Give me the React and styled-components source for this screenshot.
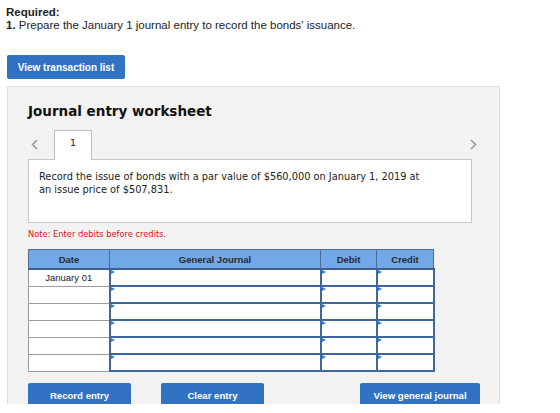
import React from 'react';
import styled, { createGlobalStyle } from 'styled-components';

const GlobalStyle = createGlobalStyle`
  html, body {
    margin: 0;
    padding: 0;
    background: #ffffff;
  }
`;

const Page = styled.div`
  height: 404px;
  overflow: hidden;
  padding: 6px 0 0 7px;
  box-sizing: border-box;
  font-family: "Liberation Sans", Arial, sans-serif;
  color: #222;
`;

const Required = styled.div`
  font-size: 11.5px;
  line-height: 13px;
  margin-left: -1px;
  b {
    font-weight: bold;
  }
`;

const BlueButton = styled.button`
  display: flex;
  align-items: center;
  justify-content: center;
  width: ${p => p.$w}px;
  height: 24px;
  border: none;
  border-radius: 2px;
  background: #3272c2;
  color: #ffffff;
  font-family: "Liberation Sans", Arial, sans-serif;
  font-weight: bold;
  font-size: ${p => p.$fs || 9.6}px;
  padding: 0;
  flex: none;
`;

const TopButtonRow = styled.div`
  margin-top: 23px;
`;

const Panel = styled.div`
  margin-top: 7px;
  width: 493px;
  box-sizing: border-box;
  background: #f2f2f2;
  border: 1px solid #dedede;
  padding: 15px 0 0 20px;
  min-height: 330px;
`;

const Title = styled.h2`
  margin: 0;
  font-family: "DejaVu Sans", Verdana, sans-serif;
  font-weight: bold;
  font-size: 13.5px;
  line-height: 18px;
  color: #111;
`;

const TabRow = styled.div`
  display: flex;
  align-items: flex-end;
  width: 444px;
  margin-top: 9px;
  height: 30px;
`;

const Chevron = styled.div`
  width: 26px;
  align-self: center;
  display: flex;
  justify-content: ${p => (p.$right ? 'flex-end' : 'flex-start')};
  padding-left: ${p => (p.$right ? 0 : 3)}px;
  margin-left: ${p => (p.$right ? 'auto' : 0)};
  margin-right: ${p => (p.$right ? -5 : 0)}px;
  box-sizing: border-box;
`;

const Tab = styled.div`
  width: 38px;
  height: 30px;
  box-sizing: border-box;
  background: #ffffff;
  border: 1px solid #bdbdbd;
  border-bottom: none;
  margin-bottom: -1px;
  position: relative;
  z-index: 1;
  display: flex;
  justify-content: center;
  padding-top: 6px;
  font-family: "DejaVu Sans", Verdana, sans-serif;
  font-size: 9.5px;
  color: #222;
`;

const ContentBox = styled.div`
  width: 444px;
  height: 64px;
  box-sizing: border-box;
  background: #ffffff;
  border: 1px solid #c8c8c8;
  padding: 10px 10px 0 10px;
  font-family: "DejaVu Sans", Verdana, sans-serif;
  font-size: 9.8px;
  line-height: 13px;
  color: #222;
`;

const Note = styled.div`
  margin-top: 6px;
  font-family: "DejaVu Sans", Verdana, sans-serif;
  font-size: 8.3px;
  line-height: 11px;
  color: #d0161f;
`;

const Table = styled.table`
  margin-top: 9px;
  border-collapse: collapse;
  table-layout: fixed;
  width: 401px;
`;

const Th = styled.th`
  height: 18px;
  padding: 0;
  background: #72a8e8;
  border: 1px solid #4e6d92;
  border-bottom: 2px solid #3d5f8a;
  font-family: "Liberation Sans", Arial, sans-serif;
  font-weight: bold;
  font-size: 9.5px;
  color: #2a2a2a;
  width: ${p => p.$w}px;
`;

const DateCell = styled.td`
  height: 15px;
  padding: 0;
  background: #ffffff;
  border: 1px solid #9b9b9b;
  text-align: center;
  font-family: "Liberation Sans", Arial, sans-serif;
  font-size: 9.5px;
  color: #222;
`;

const InputCell = styled.td`
  height: 15px;
  padding: 0;
  background: #ffffff;
  border: 2px solid #3e679c;
  position: relative;
  &::before {
    content: "";
    position: absolute;
    left: 0;
    top: 0;
    border-top: 2px solid transparent;
    border-bottom: 2px solid transparent;
    border-left: 4px solid #2f7fe0;
  }
`;

const ButtonRow = styled.div`
  display: flex;
  width: 452px;
  margin-top: 11px;
  gap: 30px;
  & > :last-child {
    margin-left: auto;
  }
`;

const rows = ['January 01', '', '', '', '', ''];

function ChevronIcon({ dir }) {
  return (
    <svg width="7" height="11" viewBox="0 0 7 11">
      <path
        d={dir === 'left' ? 'M6 1 L1.5 5.5 L6 10' : 'M1 1 L5.5 5.5 L1 10'}
        fill="none"
        stroke="#9a9a9a"
        strokeWidth="1.6"
      />
    </svg>
  );
}

export default function App() {
  return (
    <>
      <GlobalStyle />
      <Page>
        <Required>
          <b>Required:</b>
          <br />
          <b>1.</b> Prepare the January 1 journal entry to record the bonds' issuance.
        </Required>
        <TopButtonRow>
          <BlueButton $w={118} $fs={10}>View transaction list</BlueButton>
        </TopButtonRow>
        <Panel>
          <Title>Journal entry worksheet</Title>
          <TabRow>
            <Chevron>
              <ChevronIcon dir="left" />
            </Chevron>
            <Tab>1</Tab>
            <Chevron $right>
              <ChevronIcon dir="right" />
            </Chevron>
          </TabRow>
          <ContentBox>
            Record the issue of bonds with a par value of $560,000 on January 1, 2019 at
            <br />
            an issue price of $507,831.
          </ContentBox>
          <Note>Note: Enter debits before credits.</Note>
          <Table>
            <thead>
              <tr>
                <Th $w={80}>Date</Th>
                <Th $w={210}>General Journal</Th>
                <Th $w={55}>Debit</Th>
                <Th $w={56}>Credit</Th>
              </tr>
            </thead>
            <tbody>
              {rows.map((d, i) => (
                <tr key={i}>
                  <DateCell>{d}</DateCell>
                  <InputCell />
                  <InputCell />
                  <InputCell />
                </tr>
              ))}
            </tbody>
          </Table>
          <ButtonRow>
            <BlueButton $w={103}>Record entry</BlueButton>
            <BlueButton $w={103}>Clear entry</BlueButton>
            <BlueButton $w={120}>View general journal</BlueButton>
          </ButtonRow>
        </Panel>
      </Page>
    </>
  );
}
